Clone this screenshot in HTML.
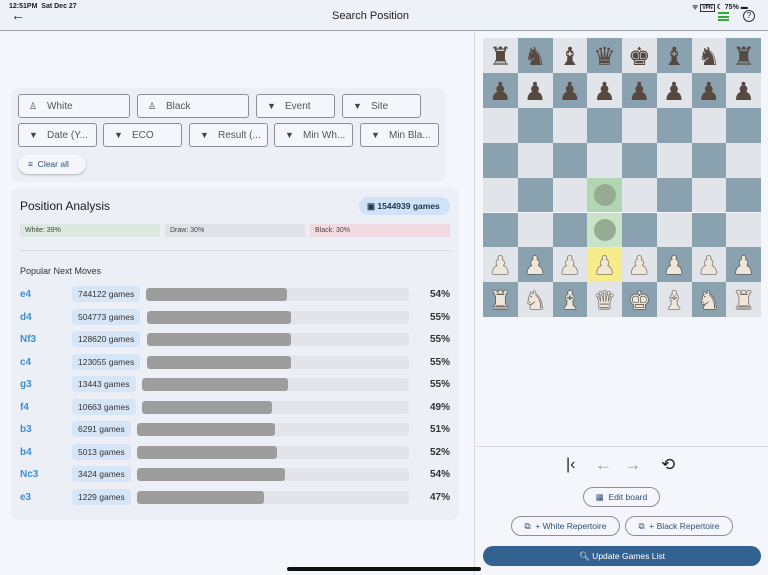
<!DOCTYPE html>
<html><head><meta charset="utf-8"><style>
*{box-sizing:border-box;margin:0;padding:0}
body{width:768px;height:575px;overflow:hidden;background:#f4f6fb;font-family:"Liberation Sans",sans-serif;position:relative;color:#1c1c1e}
.abs{position:absolute}
.hdr{left:0;top:0;width:768px;height:31px;background:#eef1f7;border-bottom:1px solid #9aa0a8}
.fbox{position:absolute;height:24px;border:1px solid #8c9096;border-radius:3px;font-size:10px;color:#555;display:flex;align-items:center;padding-left:10px;background:#f4f6fb}
.fbox span.i{width:18px;font-size:9px;color:#444}
.card{background:#eceff6;border-radius:8px}
.mv{position:absolute;left:20px;font-size:10px;font-weight:bold;color:#3b8fd9}
.chip{position:absolute;left:72px;height:16px;background:#d7e6f7;border-radius:3px;font-size:8.5px;color:#333;padding:3px 6px;line-height:10px}
.bar{position:absolute;height:13px;background:#e2e4ea;border-radius:3px;overflow:hidden}
.bar i{display:block;height:100%;background:#9d9d9d;border-radius:3px}
.pct{position:absolute;left:420px;width:30px;text-align:right;font-size:10px;font-weight:bold;color:#333}
.sq{position:absolute;width:34.75px;height:34.9px;display:flex;align-items:center;justify-content:center;font-family:"DejaVu Sans",sans-serif;font-size:25px;line-height:1;padding-top:2px}
.b{color:#574840}
.w{color:#f0e6d8;text-shadow:0 0 1px #333,0 0 1px #333,0 0 1px #333,0 0 1px #333}
.btn{position:absolute;height:20px;border:1px solid #8c9096;border-radius:10px;font-size:8.5px;color:#2e4f78;display:flex;align-items:center;justify-content:center;background:#f4f6fb}
</style></head><body>
<div class="abs hdr"></div>
<div class="abs" style="left:9px;top:3px;font-size:7px;font-weight:bold">12:51PM&nbsp;&nbsp;Sat Dec 27</div>
<div class="abs" style="left:11px;top:7px;font-size:14px">←</div>
<div class="abs" style="left:332px;top:10px;font-size:11px;color:#222">Search Position</div>
<div class="abs" style="left:692px;top:3px;font-size:7px;font-weight:bold">ᯤ <span style="border:1px solid #333;font-size:5px;padding:0 1px">VPN</span> ☾ 75% ▬</div>
<div class="abs" style="left:718px;top:12px;width:11px;height:9px;border-top:2px solid #3a3;border-bottom:2px solid #3a3"><div style="margin-top:1.5px;height:2px;background:#3a3"></div></div>
<div class="abs" style="left:743px;top:10px;width:12px;height:12px;border:1.3px solid #333;border-radius:50%;font-size:8px;text-align:center;line-height:10px">?</div>
<div class="abs" style="left:474px;top:32px;width:1px;height:543px;background:#d6d9df"></div>

<div class="abs card" style="left:11px;top:88px;width:435px;height:94px"></div>
<div class="fbox" style="left:18px;top:94px;width:112px"><span class="i">♙</span>White</div>
<div class="fbox" style="left:137px;top:94px;width:112px"><span class="i">♙</span>Black</div>
<div class="fbox" style="left:256px;top:94px;width:79px"><span class="i">▼</span>Event</div>
<div class="fbox" style="left:342px;top:94px;width:79px"><span class="i">▼</span>Site</div>
<div class="fbox" style="left:18px;top:123px;width:79px"><span class="i">▼</span>Date (Y...</div>
<div class="fbox" style="left:103px;top:123px;width:79px"><span class="i">▼</span>ECO</div>
<div class="fbox" style="left:189px;top:123px;width:79px"><span class="i">▼</span>Result (...</div>
<div class="fbox" style="left:274px;top:123px;width:79px"><span class="i">▼</span>Min Wh...</div>
<div class="fbox" style="left:360px;top:123px;width:79px"><span class="i">▼</span>Min Bla...</div>
<div class="abs" style="left:18px;top:154px;width:68px;height:20px;border-radius:10px;background:#f4f6fb;box-shadow:0 1px 2px rgba(0,0,0,.25);font-size:8.5px;color:#2e4f78;padding:5px 0 0 10px">≡&nbsp; Clear all</div>

<div class="abs card" style="left:11px;top:188px;width:448px;height:332px"></div>
<div class="abs" style="left:20px;top:199px;font-size:12px">Position Analysis</div>
<div class="abs" style="left:359px;top:197px;width:91px;height:18px;border-radius:9px;background:#cfe2f7;font-size:8.5px;font-weight:bold;color:#1f3550;padding:4px 0 0 8px">▣ 1544939 games</div>
<div class="abs" style="left:20px;top:224px;width:140px;height:13px;background:#dce9e0;font-size:7px;padding:3px 5px;color:#444">White: 39%</div>
<div class="abs" style="left:165px;top:224px;width:140px;height:13px;background:#e0e2e6;font-size:7px;padding:3px 5px;color:#444">Draw: 30%</div>
<div class="abs" style="left:310px;top:224px;width:140px;height:13px;background:#f1dbe0;font-size:7px;padding:3px 5px;color:#444">Black: 30%</div>
<div class="abs" style="left:20px;top:250px;width:430px;height:1px;background:#d6d9df"></div>
<div class="abs" style="left:20px;top:266px;font-size:9px;color:#333">Popular Next Moves</div>

<div class="mv" style="top:289px">e4</div><div class="chip" style="top:286px">744122 games</div><div class="bar" style="left:146px;top:288px;width:263px"><i style="width:141px"></i></div><div class="pct" style="top:289px">54%</div>
<div class="mv" style="top:312px">d4</div><div class="chip" style="top:309px">504773 games</div><div class="bar" style="left:147px;top:311px;width:262px"><i style="width:144px"></i></div><div class="pct" style="top:312px">55%</div>
<div class="mv" style="top:334px">Nf3</div><div class="chip" style="top:331px">128620 games</div><div class="bar" style="left:147px;top:333px;width:262px"><i style="width:144px"></i></div><div class="pct" style="top:334px">55%</div>
<div class="mv" style="top:357px">c4</div><div class="chip" style="top:354px">123055 games</div><div class="bar" style="left:147px;top:356px;width:262px"><i style="width:144px"></i></div><div class="pct" style="top:357px">55%</div>
<div class="mv" style="top:379px">g3</div><div class="chip" style="top:376px">13443 games</div><div class="bar" style="left:142px;top:378px;width:267px"><i style="width:146px"></i></div><div class="pct" style="top:379px">55%</div>
<div class="mv" style="top:402px">f4</div><div class="chip" style="top:399px">10663 games</div><div class="bar" style="left:142px;top:401px;width:267px"><i style="width:130px"></i></div><div class="pct" style="top:402px">49%</div>
<div class="mv" style="top:424px">b3</div><div class="chip" style="top:421px">6291 games</div><div class="bar" style="left:137px;top:423px;width:272px"><i style="width:138px"></i></div><div class="pct" style="top:424px">51%</div>
<div class="mv" style="top:447px">b4</div><div class="chip" style="top:444px">5013 games</div><div class="bar" style="left:137px;top:446px;width:272px"><i style="width:140px"></i></div><div class="pct" style="top:447px">52%</div>
<div class="mv" style="top:469px">Nc3</div><div class="chip" style="top:466px">3424 games</div><div class="bar" style="left:137px;top:468px;width:272px"><i style="width:148px"></i></div><div class="pct" style="top:469px">54%</div>
<div class="mv" style="top:492px">e3</div><div class="chip" style="top:489px">1229 games</div><div class="bar" style="left:137px;top:491px;width:272px"><i style="width:127px"></i></div><div class="pct" style="top:492px">47%</div>

<div id="board" class="abs" style="left:483px;top:38px;width:278px;height:279px"></div>
<script>
var b=document.getElementById('board');
var back=['♜','♞','♝','♛','♚','♝','♞','♜'];
var h='';
for(var r=0;r<8;r++)for(var c=0;c<8;c++){
 var light=(r+c)%2==0;var bg=light?'#e1e5ea':'#8aa1b0';
 if(c==3&&(r==4||r==5))bg=light?'#c8e3c8':'#b2d5b4';
 if(c==3&&r==6)bg='#f7ec8c';
 var p='',cl='';
 if(r==0){p=back[c];cl='b'}else if(r==1){p='♟';cl='b'}else if(r==6){p='♟';cl='w'}else if(r==7){p=back[c];cl='w'}
 if(c==3&&(r==4||r==5))p='<span style="width:22px;height:22px;border-radius:50%;background:#95ac92;display:block;margin-top:-2px"></span>';
 h+='<div class="sq '+cl+'" style="left:'+(c*34.75)+'px;top:'+(r*34.9)+'px;background:'+bg+'">'+p+'</div>';
}
b.innerHTML=h;
</script>

<div class="abs" style="left:476px;top:446px;width:292px;height:1px;background:#d6d9df"></div>
<div class="abs" style="left:566px;top:456px;font-size:16px;color:#222">|‹</div>
<div class="abs" style="left:595px;top:455px;font-size:17px;color:#999">←</div>
<div class="abs" style="left:624px;top:455px;font-size:17px;color:#999">→</div>
<div class="abs" style="left:661px;top:455px;font-size:17px;color:#222">⟲</div>
<div class="btn" style="left:583px;top:487px;width:77px">▦&nbsp; Edit board</div>
<div class="btn" style="left:511px;top:516px;width:109px">⧉&nbsp; + White Repertoire</div>
<div class="btn" style="left:625px;top:516px;width:108px">⧉&nbsp; + Black Repertoire</div>
<div class="abs" style="left:483px;top:546px;width:278px;height:20px;border-radius:10px;background:#336291;color:#fff;font-size:8.5px;text-align:center;line-height:20px">🔍&#xFE0E; Update Games List</div>
<div class="abs" style="left:287px;top:567px;width:194px;height:4px;border-radius:2px;background:#111"></div>
</body></html>
